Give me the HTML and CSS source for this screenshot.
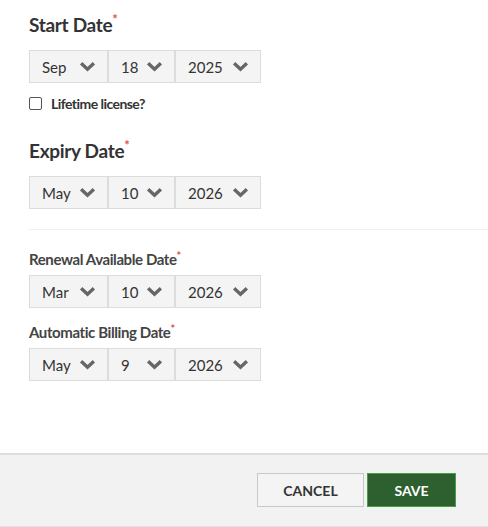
FILE: index.html
```html
<!DOCTYPE html>
<html>
<head>
  <title>License Dates</title>
  <meta name="viewport" content="width=device-width, initial-scale=1">
  <link rel="stylesheet" href="styles.css">
</head>
<body>
  <div class="form-body">
    <h2 class="section-title">Start Date<span class="req">*</span></h2>
    <div class="date-row">
      <div class="pick pick-month">Sep<svg class="chev" viewBox="0 0 16 10"><path d="M2 2l6 5.5L14 2"/></svg></div>
      <div class="pick pick-day">18<svg class="chev" viewBox="0 0 16 10"><path d="M2 2l6 5.5L14 2"/></svg></div>
      <div class="pick pick-year">2025<svg class="chev" viewBox="0 0 16 10"><path d="M2 2l6 5.5L14 2"/></svg></div>
    </div>
    <label class="check-row"><span class="box"></span>Lifetime license?</label>

    <h2 class="section-title expiry">Expiry Date<span class="req">*</span></h2>
    <div class="date-row">
      <div class="pick pick-month">May<svg class="chev" viewBox="0 0 16 10"><path d="M2 2l6 5.5L14 2"/></svg></div>
      <div class="pick pick-day">10<svg class="chev" viewBox="0 0 16 10"><path d="M2 2l6 5.5L14 2"/></svg></div>
      <div class="pick pick-year">2026<svg class="chev" viewBox="0 0 16 10"><path d="M2 2l6 5.5L14 2"/></svg></div>
    </div>

    <hr class="divider">

    <div class="field-label">Renewal Available Date<span class="req">*</span></div>
    <div class="date-row">
      <div class="pick pick-month">Mar<svg class="chev" viewBox="0 0 16 10"><path d="M2 2l6 5.5L14 2"/></svg></div>
      <div class="pick pick-day">10<svg class="chev" viewBox="0 0 16 10"><path d="M2 2l6 5.5L14 2"/></svg></div>
      <div class="pick pick-year">2026<svg class="chev" viewBox="0 0 16 10"><path d="M2 2l6 5.5L14 2"/></svg></div>
    </div>

    <div class="field-label billing">Automatic Billing Date<span class="req">*</span></div>
    <div class="date-row">
      <div class="pick pick-month">May<svg class="chev" viewBox="0 0 16 10"><path d="M2 2l6 5.5L14 2"/></svg></div>
      <div class="pick pick-day">9<svg class="chev" viewBox="0 0 16 10"><path d="M2 2l6 5.5L14 2"/></svg></div>
      <div class="pick pick-year">2026<svg class="chev" viewBox="0 0 16 10"><path d="M2 2l6 5.5L14 2"/></svg></div>
    </div>
  </div>

  <div class="footer">
    <button class="btn btn-cancel">CANCEL</button>
    <button class="btn btn-save">SAVE</button>
  </div>
</body>
</html>
```

FILE: styles.css
```css
body {
  margin: 0;
  font-family: Lato, "Open Sans", sans-serif;
  color: #333;
  background: #fff;
}
/* main form area */
.form-body {
  box-sizing: border-box;
  padding: 13px 0 0 29px;
  height: 453px;
}
.section-title {
  margin: 0 0 13px 0;
  font-size: 19px;
  font-weight: 700;
  color: #333;
  line-height: 24px;
  letter-spacing: -0.3px;
}
.section-title.expiry {
  margin-top: 27px;
}
.req {
  color: #d9534f;
  font-size: 13px;
  vertical-align: top;
  line-height: 13px;
}
.field-label .req {
  font-size: 11px;
  line-height: 11px;
}
/* date pickers */
.date-row {
  display: flex;
  height: 33px;
}
.pick {
  display: flex;
  align-items: center;
  justify-content: space-between;
  box-sizing: border-box;
  height: 33px;
  padding: 0 11px 0 12px;
  background: #f4f4f4;
  border: 1px solid #dcdcdc;
  font-size: 15px;
  color: #333;
}
.pick-month { width: 79px; }
.pick-day { width: 67px; }
.pick-year { width: 86px; }
.chev {
  width: 17px;
  height: 11px;
  fill: none;
  stroke: #666;
  stroke-width: 3.2;
}
.check-row {
  display: flex;
  align-items: center;
  margin-top: 12px;
  font-size: 14px;
  font-weight: 700;
  letter-spacing: -0.55px;
  color: #333;
}
.box {
  width: 11px;
  height: 11px;
  border: 1px solid #555;
  border-radius: 2px;
  margin-right: 9px;
}
.divider {
  border: none;
  border-top: 1px solid #f0f0f0;
  margin: 20px 0 20px 0;
}
.field-label {
  font-size: 15px;
  font-weight: 700;
  color: #444;
  letter-spacing: -0.4px;
  margin-bottom: 7px;
  line-height: 18px;
}
.field-label.billing {
  margin-top: 15px;
}
/* footer bar */
.footer {
  box-sizing: border-box;
  height: 74px;
  border-top: 2px solid #dedede;
  border-bottom: 1px solid #e2e2e2;
  background: #f2f2f2;
  display: flex;
  justify-content: flex-end;
  align-items: flex-start;
  padding: 18px 32px 0 0;
  gap: 3px;
}
.btn {
  height: 34px;
  border-radius: 0;
  font-family: Lato, "Open Sans", sans-serif;
  font-size: 14px;
  font-weight: 700;
  cursor: pointer;
}
.btn-cancel {
  width: 107px;
  background: #f4f4f4;
  border: 1px solid #c8c8c8;
  color: #333;
}
.btn-save {
  width: 89px;
  background: #2d5f2f;
  border: 1px solid #43a047;
  color: #fff;
}
```
